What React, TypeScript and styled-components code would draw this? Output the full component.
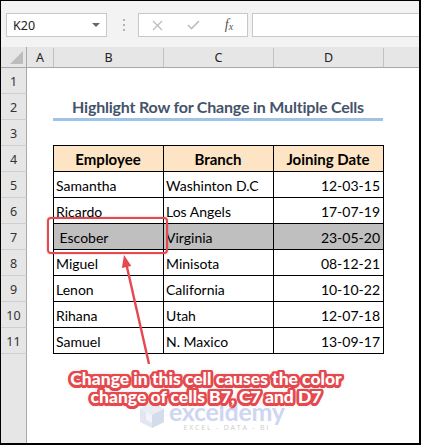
import React from 'react';
import styled, { createGlobalStyle } from 'styled-components';

const GlobalStyle = createGlobalStyle`
  html, body {
    margin: 0;
    padding: 0;
    background: #fff;
  }
  body {
    font-family: 'Lato', 'Liberation Sans', sans-serif;
  }
`;

const Frame = styled.div`
  position: relative;
  width: 421px;
  height: 445px;
  box-sizing: border-box;
  border-style: solid;
  border-color: #000;
  border-width: 1px 2px 2px 1px;
  overflow: hidden;
  display: flex;
  flex-direction: column;
  background: #fff;
`;

const Toolbar = styled.div`
  height: 46px;
  flex-shrink: 0;
  display: flex;
  align-items: flex-start;
  padding: 12px 0 0 5px;
  box-sizing: border-box;
  background: #f3f3f3;
`;

const NameBox = styled.div`
  width: 101px;
  height: 24px;
  box-sizing: border-box;
  border: 1px solid #c8c8c8;
  background: #fff;
  display: flex;
  align-items: center;
  justify-content: space-between;
  padding: 0 6px;
  font-family: 'Noto Sans', 'Open Sans', sans-serif;
  font-size: 12.5px;
  color: #222;
`;

const DropArrow = styled.span`
  width: 0;
  height: 0;
  border-left: 4px solid transparent;
  border-right: 4px solid transparent;
  border-top: 4px solid #666;
`;

const Grip = styled.div`
  width: 3px;
  height: 24px;
  margin: 0 13px 0 15px;
  display: flex;
  flex-direction: column;
  justify-content: center;
  gap: 3px;
  align-items: center;

  span {
    width: 2px;
    height: 2px;
    background: #b4b4b4;
  }
`;

const FxButtons = styled.div`
  height: 24px;
  box-sizing: border-box;
  border: 1px solid #c8c8c8;
  background: #fff;
  display: flex;
`;

const FxSlot = styled.div`
  width: 36px;
  height: 100%;
  display: flex;
  align-items: center;
  justify-content: center;
`;

const FxLabel = styled.span`
  font-family: 'Liberation Serif', serif;
  font-style: italic;
  font-size: 14px;
  color: #555;

  sub {
    font-size: 10px;
    vertical-align: -1px;
  }
`;

const FormulaInput = styled.div`
  flex: 1;
  height: 24px;
  margin: 0 -10px 0 4px;
  box-sizing: border-box;
  border: 1px solid #c8c8c8;
  background: #fff;
`;

const COLS = '26px 26px 110px 110px 110px 1fr';

const ColumnBar = styled.div`
  height: 21px;
  flex-shrink: 0;
  box-sizing: border-box;
  display: grid;
  grid-template-columns: ${COLS};
  background: #e6e6e6;
  border-bottom: 1px solid #a8a8a8;
`;

const Corner = styled.div`
  border-right: 1px solid #a8a8a8;
  display: flex;
  align-items: flex-end;
  justify-content: flex-end;
  padding: 0 3px 3px 0;
`;

const CornerTriangle = styled.span`
  width: 0;
  height: 0;
  border-left: 13px solid transparent;
  border-bottom: 13px solid #bdbdbd;
`;

const ColHead = styled.div<{ $first?: boolean }>`
  border-left: ${(p) => (p.$first ? 'none' : '1px solid #c2c2c2')};
  margin-top: 1px;
  display: flex;
  align-items: center;
  justify-content: center;
  font-family: 'Noto Sans', 'Open Sans', sans-serif;
  font-size: 12.5px;
  color: #222;
`;

const Sheet = styled.div`
  flex: 1;
  display: grid;
  grid-template-columns: ${COLS};
  grid-template-rows: repeat(11, 26px) 1fr;
`;

const RowNum = styled.div<{ $row: number }>`
  grid-column: 1;
  grid-row: ${(p) => p.$row};
  box-sizing: border-box;
  background: #e6e6e6;
  border-right: 1px solid #a8a8a8;
  border-bottom: 1px solid #cfcfcf;
  display: flex;
  align-items: center;
  justify-content: center;
  padding-top: 2px;
  font-family: 'Noto Sans', 'Open Sans', sans-serif;
  font-size: 12.5px;
  color: #333;
`;

const RowFiller = styled.div`
  grid-column: 1;
  grid-row: 12;
  background: #e6e6e6;
  border-right: 1px solid #a8a8a8;
`;

const Title = styled.div`
  grid-column: 3 / 6;
  grid-row: 2;
  align-self: start;
  height: 27px;
  box-sizing: border-box;
  border-bottom: 3px solid #9dc3e6;
  display: flex;
  align-items: center;
  justify-content: center;
  padding-top: 1px;
  font-size: 16px;
  font-weight: 700;
  color: #44546a;
  letter-spacing: -0.2px;
`;

const Table = styled.div`
  grid-column: 3 / 6;
  grid-row: 4 / 12;
  align-self: start;
  margin-top: -1px;
  width: 331px;
  box-sizing: border-box;
  display: grid;
  grid-template-columns: repeat(3, 110px);
  grid-auto-rows: 26px;
  border-left: 1px solid #000;
  border-top: 1px solid #000;
`;

const Cell = styled.div<{ $head?: boolean; $hl?: boolean; $right?: boolean }>`
  box-sizing: border-box;
  border-right: 1px solid #000;
  border-bottom: 1px solid #000;
  display: flex;
  align-items: center;
  justify-content: ${(p) => (p.$head ? 'center' : p.$right ? 'flex-end' : 'flex-start')};
  padding: 1px 3px 0 2px;
  white-space: pre;
  background: ${(p) => (p.$head ? '#fce4c4' : p.$hl ? '#bfbfbf' : '#fff')};
  font-size: ${(p) => (p.$head ? '15px' : '14px')};
  font-weight: ${(p) => (p.$head ? 700 : 400)};
  color: #000;
`;

const Highlight = styled.div`
  position: absolute;
  left: 46px;
  top: 216px;
  width: 121px;
  height: 37px;
  box-sizing: border-box;
  border: 2px solid #e5484d;
  border-radius: 4px;
  box-shadow: 0 0 2px rgba(120, 0, 0, 0.35);
`;

const Overlay = styled.svg`
  position: absolute;
  left: 0;
  top: 0;
  pointer-events: none;
`;

const RED = '#e5484d';

const Callout = styled.div`
  position: absolute;
  left: 26px;
  top: 369px;
  width: 358px;
  text-align: center;
  font-size: 17.5px;
  line-height: 18px;
  font-weight: 900;
  color: #fff;
  text-shadow:
    2.5px 0 0 ${RED}, -2.5px 0 0 ${RED}, 0 2.5px 0 ${RED}, 0 -2.5px 0 ${RED},
    2px 2px 0 ${RED}, -2px 2px 0 ${RED}, 2px -2px 0 ${RED}, -2px -2px 0 ${RED},
    1px 2.5px 0 ${RED}, -1px 2.5px 0 ${RED}, 1px -2.5px 0 ${RED}, -1px -2.5px 0 ${RED},
    2.5px 1px 0 ${RED}, -2.5px 1px 0 ${RED}, 2.5px -1px 0 ${RED}, -2.5px -1px 0 ${RED},
    0 0 5px rgba(120, 0, 0, 0.6);
`;

const Watermark = styled.div`
  position: absolute;
  left: 137px;
  top: 400px;
  display: flex;
  align-items: flex-start;
  gap: 3px;
  opacity: 0.9;
`;

const MarkText = styled.div`
  display: flex;
  flex-direction: column;
  align-items: center;
`;

const MarkName = styled.span`
  font-size: 25px;
  line-height: 21px;
  font-weight: 700;
  color: #c9d2f0;
  letter-spacing: -0.3px;
`;

const MarkTag = styled.span`
  font-family: 'Open Sans', sans-serif;
  font-size: 7px;
  line-height: 9px;
  letter-spacing: 1.8px;
  color: #c8c8c8;
  margin-top: 1px;
`;

const rows = [
  { name: 'Samantha', branch: 'Washinton D.C', date: '12-03-15' },
  { name: 'Ricardo', branch: 'Los Angels', date: '17-07-19' },
  { name: ' Escober', branch: 'Virginia', date: '23-05-20', hl: true },
  { name: 'Miguel', branch: 'Minisota', date: '08-12-21' },
  { name: 'Lenon', branch: 'California', date: '10-10-22' },
  { name: 'Rihana', branch: 'Utah', date: '12-07-18' },
  { name: 'Samuel', branch: 'N. Maxico', date: '13-09-17' },
];

const App: React.FC = () => {
  return (
    <>
      <GlobalStyle />
      <Frame>
        <Toolbar>
          <NameBox>
            K20
            <DropArrow />
          </NameBox>
          <Grip>
            <span />
            <span />
            <span />
          </Grip>
          <FxButtons>
            <FxSlot>
              <svg width="11" height="11" viewBox="0 0 11 11">
                <path d="M1 1 L10 10 M10 1 L1 10" stroke="#bdbdbd" strokeWidth="1.3" />
              </svg>
            </FxSlot>
            <FxSlot>
              <svg width="13" height="10" viewBox="0 0 13 10">
                <path d="M1 5 L4.5 8.5 L12 1" stroke="#bdbdbd" strokeWidth="1.6" fill="none" />
              </svg>
            </FxSlot>
            <FxSlot>
              <FxLabel>
                f<sub>x</sub>
              </FxLabel>
            </FxSlot>
          </FxButtons>
          <FormulaInput />
        </Toolbar>

        <ColumnBar>
          <Corner>
            <CornerTriangle />
          </Corner>
          <ColHead $first>A</ColHead>
          <ColHead>B</ColHead>
          <ColHead>C</ColHead>
          <ColHead>D</ColHead>
          <ColHead />
        </ColumnBar>

        <Sheet>
          {Array.from({ length: 11 }, (_, i) => (
            <RowNum key={i} $row={i + 1}>
              {i + 1}
            </RowNum>
          ))}
          <RowFiller />

          <Title>Highlight Row for Change in Multiple Cells</Title>

          <Table>
            <Cell $head>Employee</Cell>
            <Cell $head>Branch</Cell>
            <Cell $head>Joining Date</Cell>
            {rows.map((r) => (
              <React.Fragment key={r.name}>
                <Cell $hl={r.hl}>{r.name}</Cell>
                <Cell $hl={r.hl}>{r.branch}</Cell>
                <Cell $hl={r.hl} $right>
                  {r.date}
                </Cell>
              </React.Fragment>
            ))}
          </Table>
        </Sheet>

        <Highlight />

        <Overlay width="421" height="445" viewBox="1 1 421 445">
          <line x1="149" y1="364" x2="126.5" y2="265" stroke={RED} strokeWidth="2.4" />
          <polygon points="124,255 131.3,266 121.9,268" fill={RED} />
        </Overlay>

        <Watermark>
          <svg width="28" height="28" viewBox="0 0 28 28">
            <polygon points="14,1 26,8 26,21 14,27 2,21 2,8" fill="#dfe4f0" />
            <polygon points="14,1 26,8 14,14 2,8" fill="#e9ecf4" />
            <polygon points="14,14 26,8 26,21 14,27" fill="#d0d8ec" />
            <polygon points="8,11 14,14 14,22 8,19" fill="#f3f5fa" />
          </svg>
          <MarkText>
            <MarkName>exceldemy</MarkName>
            <MarkTag>EXCEL - DATA - BI</MarkTag>
          </MarkText>
        </Watermark>

        <Callout>
          Change in this cell causes the color
          <br />
          change of cells B7, C7 and D7
        </Callout>
      </Frame>
    </>
  );
};

export default App;
